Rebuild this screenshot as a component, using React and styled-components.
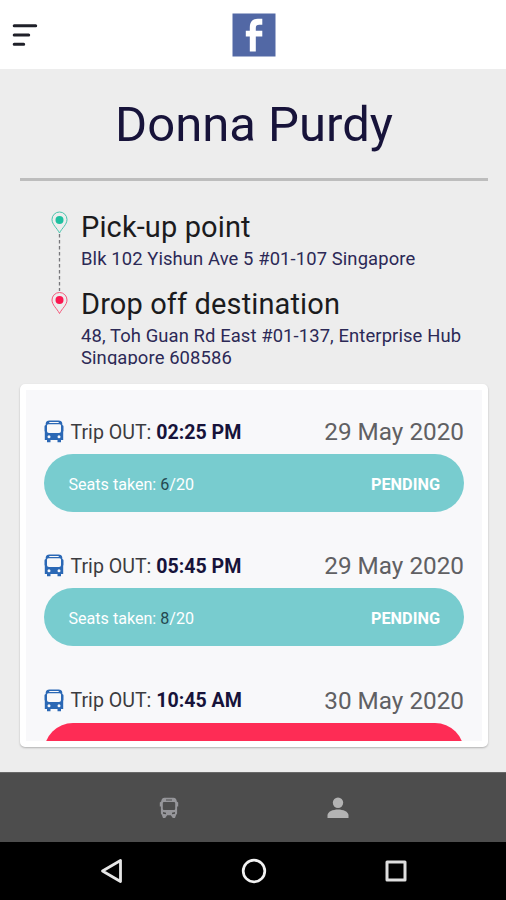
import React from 'react'
import styled, { createGlobalStyle } from 'styled-components'

const GlobalStyle = createGlobalStyle`
*{
    box-sizing:border-box;
}
body{
    margin:0;
    font-family:Roboto, "Liberation Sans", sans-serif;
    background-color:#ededed;
}
`;

const Screen = styled.div`
width:506px;
height:900px;
display:flex;
flex-direction:column;
overflow:hidden;
background-color:#ededed;
`;

const Header = styled.header`
height:69px;
flex:none;
display:grid;
grid-template-columns:1fr 44px 1fr;
align-items:center;
padding-left:12px;
padding-right:11px;
background-color:white;
`;

const Main = styled.main`
flex:1;
min-height:0;
display:flex;
flex-direction:column;
padding:0 18px 25px 20px;
`;

const Name = styled.h1`
margin:0;
height:109px;
line-height:111px;
text-align:center;
font-size:49px;
font-weight:400;
color:#17133a;
`;

const Divider = styled.div`
height:3px;
flex:none;
background-color:#bdbdbd;
`;

const Route = styled.section`
display:flex;
height:203px;
flex:none;
padding:30px 0 0 30px;
`;

const Markers = styled.div`
width:31px;
flex:none;
`;

const Stops = styled.div`
padding-top:1px;
`;

const Stop = styled.div`
height:76.5px;
`;

const StopTitle = styled.div`
height:36px;
line-height:31px;
font-size:29px;
color:#1b1b1d;
white-space:nowrap;
letter-spacing:0.12px;
`;

const Address = styled.div`
max-height:40px;
overflow:hidden;
line-height:22px;
font-size:18.4px;
color:#2c2956;
white-space:nowrap;
letter-spacing:0.11px;
`;

const Card = styled.section`
height:363px;
flex:none;
border:6px solid white;
border-radius:5px;
background-color:#f8f8fa;
padding:27px 18px 0;
overflow:hidden;
box-shadow:0 1px 2px rgba(0,0,0,0.25);
`;

const TripList = styled.div`
height:325px;
overflow:hidden;
`;

const Trip = styled.article`
height:134.3px;
`;

const TripHead = styled.div`
height:37px;
display:flex;
align-items:center;
padding-bottom:8px;
white-space:nowrap;
`;

const TripTime = styled.span`
flex:1;
margin-left:6.5px;
padding-top:1px;
font-size:19.6px;
color:#3c3c40;

b{
    font-weight:700;
    color:#17133a;
}
`;

const TripDate = styled.span`
font-size:24.3px;
color:#606063;
`;

const Pill = styled.div`
height:58px;
border-radius:29px;
display:flex;
align-items:center;
justify-content:space-between;
padding:2px 24px 0 24.5px;
font-size:16.1px;
color:white;
background-color:${props => props.$cancelled ? '#fe2c55' : '#78cccf'};
`;

const Taken = styled.span`
color:#24474f;
`;

const Status = styled.span`
font-weight:700;
font-size:16.3px;
`;

const TabBar = styled.nav`
height:70px;
flex:none;
display:flex;
justify-content:center;
align-items:center;
gap:148px;
padding-left:2px;
background-color:#4d4d4d;
border-top:1px solid #686868;
`;

const SystemBar = styled.div`
height:58px;
flex:none;
display:flex;
justify-content:space-between;
align-items:center;
padding:0 98px 0 100px;
background-color:black;
`;

const trips = [
    { id: 1, time: '02:25 PM', date: '29 May 2020', taken: 6, seats: 20, status: 'PENDING' },
    { id: 2, time: '05:45 PM', date: '29 May 2020', taken: 8, seats: 20, status: 'PENDING' },
    { id: 3, time: '10:45 AM', date: '30 May 2020', cancelled: true },
];

const MenuIcon = () => (
    <svg width="26" height="24" viewBox="0 0 26 24" stroke="#1f2029" strokeWidth="3" strokeLinecap="round">
        <path d="M2.200 2.700h21.500M2.200 12h14.500M2.200 21.200h9.500" />
    </svg>
)

const Logo = () => (
    <svg width="44" height="44" viewBox="0 0 44 44">
        <rect x=".5" y=".5" width="43" height="43" fill="#5268a5" />
        <path d="M17.800 38.500V23.500h-4v-5.700h4v-3.300c0-5.500 3-8.800 8-8.800h4.500v6h-3c-2.500 0-3.500 1-3.500 3.200v2.900h6.500v5.700h-6.500v15z" fill="white" />
    </svg>
)

const RouteMarkers = () => (
    <svg width="20" height="104" viewBox="0 0 20 104" fill="none">
        <path d="M9.500 23v57" stroke="#77777b" strokeWidth="1.300" strokeDasharray="3.500 2.500" />
        <g stroke="#4ac4ad">
            <path d="M9.500 22C7 17 2 13.500 2 8.500a7.500 7.500 0 0 1 15 0C17 13.500 12 17 9.500 22z" />
            <circle cx="9.500" cy="9" r="4" fill="#1fc0a0" stroke="none" />
        </g>
        <g stroke="#f5577a" transform="translate(0 80.500)">
            <path d="M9.500 22C7 17 2 13.500 2 8.500a7.500 7.500 0 0 1 15 0C17 13.500 12 17 9.500 22z" />
            <circle cx="9.500" cy="8.500" r="4" fill="#fb1750" stroke="none" />
        </g>
    </svg>
)

const BusIcon = () => (
    <svg width="20" height="23" viewBox="0 0 20 23">
        <path fillRule="evenodd" fill="#2b68b5" d="M5.500 .500h9q3.500 0 3.800 3V5q1.200.2 1.200 1.500V11l-.3.800V20H17v2.300h-3.500V20h-7v2.300H3V20H.8v-8.200L.5 11V6.500Q.5 5.200 1.700 5V3.500Q2 .500 5.500 .500zM5.300 2v.9h9.400V2zM4.700 4.200Q3.200 4.200 3 5.500v5.700q0 1.800 2 1.800h10q2 0 2-1.800V5.500q-.2-1.300-1.700-1.300zM5 15.200a1.500 1.500 0 1 0 0 3 1.500 1.500 0 0 0 0-3zM15 15.200a1.500 1.500 0 1 0 0 3 1.500 1.500 0 0 0 0-3z" />
    </svg>
)

const BusTabIcon = () => (
    <svg width="20" height="22" viewBox="0 0 20 22">
        <path fillRule="evenodd" fill="#96969a" d="M5.500 .7h9q3 0 3.300 3.800l1.400 1v4h-1.100v7l-1 1.400-1.100 3h-2.200l-2-2.700H8.200l-2 2.700H4l-1.100-3-1-1.400v-7H.8v-4l1.400-1Q2.500 .7 5.500 .7zM7 2.400v1h6v-1zM5 5q-1.200 0-1.200 1.300v5.500Q3.800 13 5 13h10q1.200 0 1.200-1.200V6.300Q16.200 5 15 5zM4 15v1.800l3 .5v-1.600zM16 15l-3 .700v1.600l3-.5z" />
    </svg>
)

const PersonIcon = () => (
    <svg width="22" height="22" viewBox="0 0 22 22" fill="#b3b3b3">
        <circle cx="11" cy="5.700" r="5.200" />
        <path d="M.5 21v-2.500C.5 14.500 6 12.500 11 12.500s10.500 2 10.500 6V21z" />
    </svg>
)

const TripItem = ({item}) => {
    return (
        <Trip>
            <TripHead>
                <BusIcon/>
                <TripTime>Trip OUT: <b>{item.time}</b></TripTime>
                <TripDate>{item.date}</TripDate>
            </TripHead>
            <Pill $cancelled={item.cancelled}>
                {item.status && (
                    <>
                        <span>Seats taken: <Taken>{item.taken}</Taken>/{item.seats}</span>
                        <Status>{item.status}</Status>
                    </>
                )}
            </Pill>
        </Trip>
    )
}

const App = () => {
    return (
        <Screen>
            <GlobalStyle/>
            <Header>
                <MenuIcon/>
                <Logo/>
            </Header>
            <Main>
                <Name>Donna Purdy</Name>
                <Divider/>
                <Route>
                    <Markers>
                        <RouteMarkers/>
                    </Markers>
                    <Stops>
                        <Stop>
                            <StopTitle>Pick-up point</StopTitle>
                            <Address>Blk 102 Yishun Ave 5 #01-107 Singapore</Address>
                        </Stop>
                        <Stop>
                            <StopTitle>Drop off destination</StopTitle>
                            <Address>
                                48, Toh Guan Rd East #01-137, Enterprise Hub<br/>
                                Singapore 608586
                            </Address>
                        </Stop>
                    </Stops>
                </Route>
                <Card>
                    <TripList>
                        {trips.map(item => <TripItem item={item} key={item.id}/>)}
                    </TripList>
                </Card>
            </Main>
            <TabBar>
                <BusTabIcon/>
                <PersonIcon/>
            </TabBar>
            <SystemBar>
                <svg width="23" height="26" viewBox="0 0 23 26" fill="none" stroke="#e6e6e6" strokeWidth="2.800" strokeLinejoin="round">
                    <path d="M2.500 13L20.500 2.500v21z" />
                </svg>
                <svg width="26" height="26" viewBox="0 0 26 26" fill="none" stroke="#f2f2f2" strokeWidth="2.700">
                    <circle cx="13" cy="13" r="10.800" />
                </svg>
                <svg width="24" height="24" viewBox="0 0 24 24" fill="none" stroke="#dedede" strokeWidth="3" strokeLinejoin="round">
                    <path d="M3 3h18v18H3z" />
                </svg>
            </SystemBar>
        </Screen>
    )
}

export default App
